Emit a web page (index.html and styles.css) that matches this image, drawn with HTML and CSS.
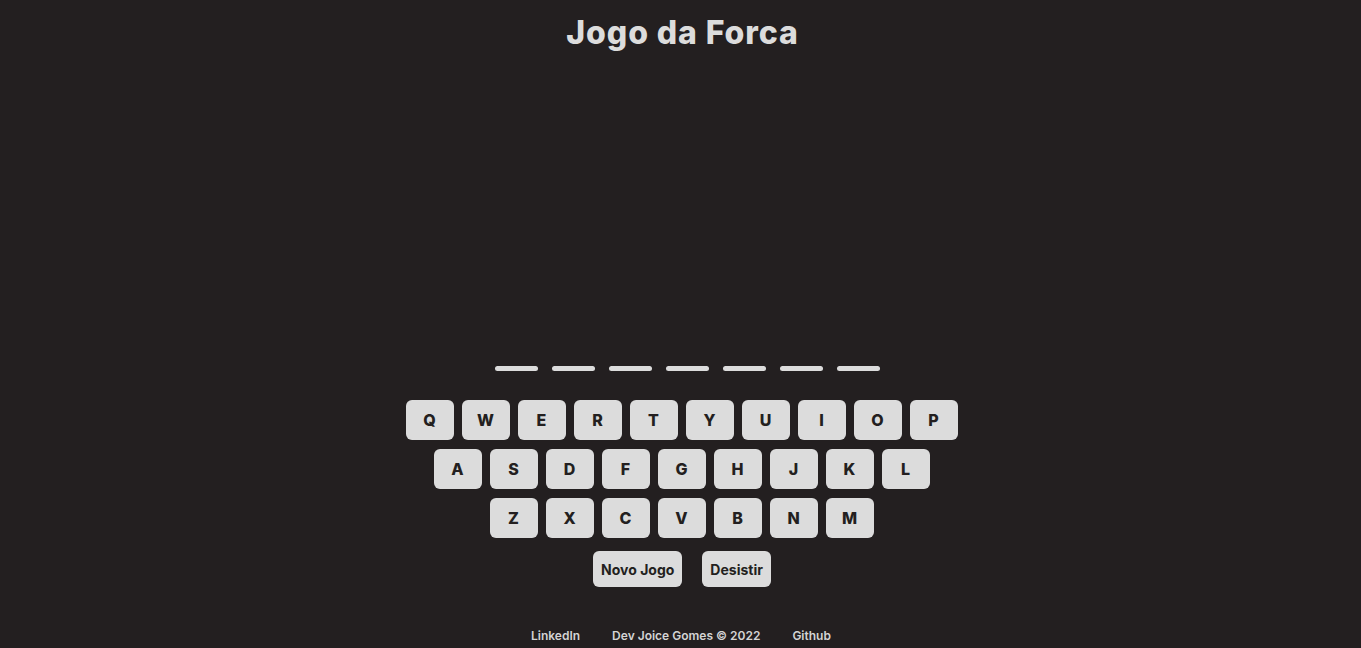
FILE: index.html
```html
<!DOCTYPE html>
<html lang="pt-BR">
<head>
<meta charset="utf-8">
<title>Jogo da Forca</title>
<link rel="stylesheet" href="styles.css">
</head>
<body>
<main class="page">
  <h1 class="title">Jogo da Forca</h1>
  <div class="gallows"></div>
  <div class="word">
    <span class="slot"></span><span class="slot"></span><span class="slot"></span><span class="slot"></span><span class="slot"></span><span class="slot"></span><span class="slot"></span>
  </div>
  <div class="keyboard">
    <div class="row">
      <button class="key">Q</button><button class="key">W</button><button class="key">E</button><button class="key">R</button><button class="key">T</button><button class="key">Y</button><button class="key">U</button><button class="key">I</button><button class="key">O</button><button class="key">P</button>
    </div>
    <div class="row">
      <button class="key">A</button><button class="key">S</button><button class="key">D</button><button class="key">F</button><button class="key">G</button><button class="key">H</button><button class="key">J</button><button class="key">K</button><button class="key">L</button>
    </div>
    <div class="row">
      <button class="key">Z</button><button class="key">X</button><button class="key">C</button><button class="key">V</button><button class="key">B</button><button class="key">N</button><button class="key">M</button>
    </div>
  </div>
  <div class="actions">
    <button class="action">Novo Jogo</button>
    <button class="action">Desistir</button>
  </div>
  <footer class="footer">
    <a class="link">LinkedIn</a>
    <span class="credit">Dev Joice Gomes © 2022</span>
    <a class="link">Github</a>
  </footer>
</main>
</body>
</html>
```
FILE: styles.css
```css
* { box-sizing: border-box; }
html, body {
  margin: 0;
  padding: 0;
  background: #231f20;
  height: 100%;
  overflow: hidden;
}
body {
  font-family: "Inter", "Noto Sans", sans-serif;
  color: #dcdcdc;
}
.page {
  display: flex;
  flex-direction: column;
  align-items: center;
}
.title {
  margin: 14px 0 0 4px;
  font-size: 32px;
  line-height: 38px;
  font-weight: 800;
  color: #dcdcdc;
  letter-spacing: 0.9px;
}
.gallows {
  height: 314px;
  width: 300px;
}
.word {
  display: flex;
  gap: 14px;
  margin-left: 13px;
}
.slot {
  display: block;
  width: 43px;
  height: 5px;
  border-radius: 3px;
  background: #dcdcdc;
}
.keyboard {
  margin-top: 29px;
  display: flex;
  flex-direction: column;
  align-items: center;
  gap: 9px;
  margin-left: 2px;
}
.row {
  display: flex;
  gap: 8px;
}
.key {
  width: 48px;
  height: 40px;
  border: none;
  border-radius: 6px;
  background: #dcdcdc;
  color: #231f20;
  font-family: "Inter", "Noto Sans", sans-serif;
  font-weight: 800;
  font-size: 16px;
  padding: 0;
}
.actions {
  margin-top: 13px;
  display: flex;
  gap: 20px;
  margin-left: 3px;
}
.action {
  height: 36px;
  padding: 0 8px;
  border: none;
  border-radius: 6px;
  background: #dcdcdc;
  color: #231f20;
  font-family: "Inter", "Noto Sans", sans-serif;
  font-weight: 700;
  font-size: 14px;
}
.footer {
  margin-top: 41px;
  display: flex;
  gap: 32px;
  font-size: 12px;
  font-weight: 600;
  color: #d4d4d4;
  margin-left: 1px;
}
.link, .credit {
  color: #d4d4d4;
  text-decoration: none;
}
```
